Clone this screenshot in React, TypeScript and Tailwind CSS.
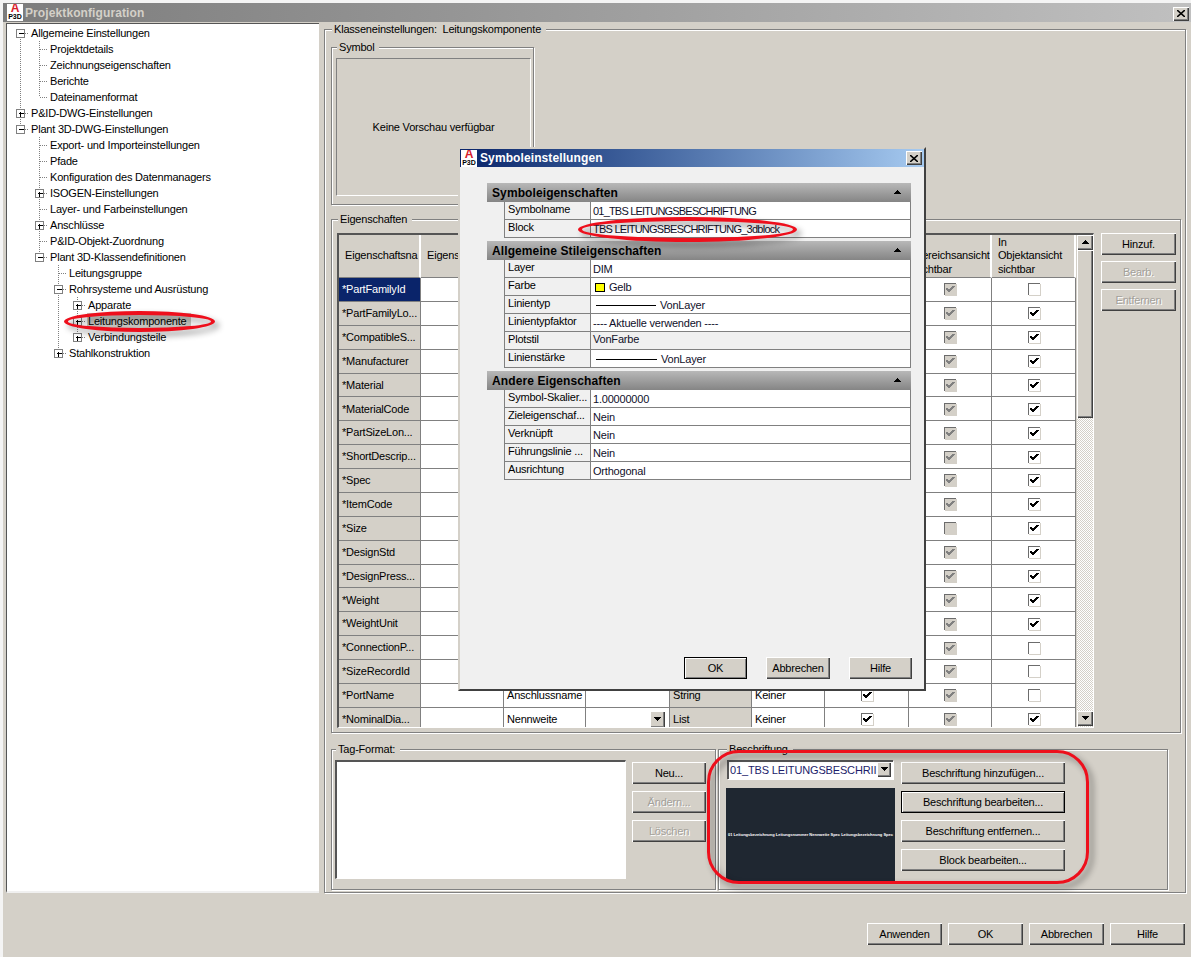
import type { ReactNode } from "react";

const raised =
  "shadow-[inset_1px_1px_0_#fff,inset_-1px_-1px_0_#404040,inset_-2px_-2px_0_#808080]";
const sans = "font-['Liberation_Sans',Arial,sans-serif]";
const heavy = "font-['Liberation_Sans',Arial,sans-serif] font-bold text-[12px] tracking-[0.1px]";

type TreeItem = {
  label: string;
  depth: number;
  exp?: "+" | "-";
  lines?: number[];
  last?: boolean;
  first?: boolean;
  selected?: boolean;
};

const treeItems: TreeItem[] = [
  { label: "Allgemeine Einstellungen", depth: 0, exp: "-", first: true },
  { label: "Projektdetails", depth: 1, lines: [0] },
  { label: "Zeichnungseigenschaften", depth: 1, lines: [0] },
  { label: "Berichte", depth: 1, lines: [0] },
  { label: "Dateinamenformat", depth: 1, lines: [0], last: true },
  { label: "P&ID-DWG-Einstellungen", depth: 0, exp: "+" },
  { label: "Plant 3D-DWG-Einstellungen", depth: 0, exp: "-", last: true },
  { label: "Export- und Importeinstellungen", depth: 1 },
  { label: "Pfade", depth: 1 },
  { label: "Konfiguration des Datenmanagers", depth: 1 },
  { label: "ISOGEN-Einstellungen", depth: 1, exp: "+" },
  { label: "Layer- und Farbeinstellungen", depth: 1 },
  { label: "Anschlüsse", depth: 1, exp: "+" },
  { label: "P&ID-Objekt-Zuordnung", depth: 1 },
  { label: "Plant 3D-Klassendefinitionen", depth: 1, exp: "-", last: true },
  { label: "Leitungsgruppe", depth: 2 },
  { label: "Rohrsysteme und Ausrüstung", depth: 2, exp: "-" },
  { label: "Apparate", depth: 3, exp: "+", lines: [2] },
  { label: "Leitungskomponente", depth: 3, exp: "+", lines: [2], selected: true },
  { label: "Verbindungsteile", depth: 3, exp: "+", lines: [2], last: true },
  { label: "Stahlkonstruktion", depth: 2, exp: "+", last: true },
];

const TreeRow = ({ item }: { item: TreeItem }) => {
  const cx = 13.5 + 19 * item.depth;
  const w = 24 + 19 * item.depth;
  return (
    <div className="flex h-4 items-center">
      <svg width={w} height={16} shapeRendering="crispEdges" className="shrink-0">
        <g stroke="#808080" strokeDasharray="1 1" fill="none">
          {(item.lines || []).map((l) => (
            <path key={l} d={`M${13.5 + 19 * l} 0V16`} />
          ))}
          <path d={`M${cx} ${item.first ? 8 : 0}V${item.last ? 8 : 16}`} />
          <path d={`M${cx} 8.5H${w - 2}`} />
        </g>
        {item.exp && (
          <g>
            <rect x={cx - 4} y={4.5} width={8} height={8} fill="#fff" stroke="#808080" />
            <path d={`M${cx - 2} 8.5H${cx + 3}`} stroke="#000" />
            {item.exp === "+" && <path d={`M${cx} 6.5V11.5`} stroke="#000" />}
          </g>
        )}
      </svg>
      <span
        className={`h-4 leading-4 pr-1 ${item.selected ? "bg-[#c8c8c2] -ml-px pl-px" : ""}`}
      >
        {item.label}
      </span>
    </div>
  );
};

const Btn = ({
  children,
  w,
  disabled,
  isDefault,
}: {
  children: ReactNode;
  w: string;
  disabled?: boolean;
  isDefault?: boolean;
}) => (
  <div
    className={`${w} h-[22px] shrink-0 flex items-center justify-center bg-[#d4d0c8] ${
      isDefault
        ? "border border-black shadow-[inset_1px_1px_0_#fff,inset_-1px_-1px_0_#808080]"
        : raised
    } ${disabled ? "text-[#a3a09a] [text-shadow:1px_1px_0_#fff]" : "text-black"}`}
  >
    {children}
  </div>
);

const Group = ({
  title,
  className,
  children,
}: {
  title: string;
  className: string;
  children: ReactNode;
}) => (
  <fieldset
    className={`border border-[#808080] shadow-[1px_1px_0_#fff,inset_1px_1px_0_#fff] ${className}`}
  >
    <legend className="ml-[1px] bg-[#d4d0c8] px-[2px] pr-[5px] h-[13px] leading-[13px] whitespace-pre">
      {title}
    </legend>
    {children}
  </fieldset>
);

const Check = ({ on, disabled }: { on: boolean; disabled?: boolean }) => (
  <div
    className={`w-[12px] h-[12px] border-t border-l border-[#6c6c6c] shadow-[1px_1px_0_#d4d0c8] ${
      disabled ? "bg-[#d4d0c8]" : "bg-white"
    }`}
  >
    {on && (
      <svg width="11" height="11" viewBox="0 0 11 11" shapeRendering="crispEdges">
        <path
          d="M1.5 4.5L4 7.5L9 2"
          fill="none"
          stroke={disabled ? "#808080" : "#000"}
          strokeWidth="2"
        />
      </svg>
    )}
  </div>
);

const Arrow = ({ dir }: { dir: "up" | "down" }) => (
  <svg width="9" height="5" viewBox="0 0 9 5" shapeRendering="crispEdges">
    <path d={dir === "down" ? "M1 0h7L4.5 4z" : "M4.5 0L8 4H1z"} fill="#000" />
  </svg>
);

type PropRow = {
  name: string;
  areaOff?: boolean;
  objOn: boolean;
  label?: string;
  kind?: string;
  list?: boolean;
  useOn?: boolean;
};

const propRows: PropRow[] = [
  { name: "*PartFamilyId", objOn: false },
  { name: "*PartFamilyLo...", objOn: true },
  { name: "*CompatibleS...", objOn: true },
  { name: "*Manufacturer", objOn: true },
  { name: "*Material", objOn: true },
  { name: "*MaterialCode", objOn: true },
  { name: "*PartSizeLon...", objOn: true },
  { name: "*ShortDescrip...", objOn: true },
  { name: "*Spec", objOn: true },
  { name: "*ItemCode", objOn: true },
  { name: "*Size", objOn: true, areaOff: true },
  { name: "*DesignStd", objOn: true },
  { name: "*DesignPress...", objOn: true },
  { name: "*Weight", objOn: true },
  { name: "*WeightUnit", objOn: true },
  { name: "*ConnectionP...", objOn: false },
  { name: "*SizeRecordId", objOn: false },
  { name: "*PortName", objOn: false, label: "Anschlussname", kind: "String", useOn: true },
  { name: "*NominalDia...", objOn: true, label: "Nennweite", kind: "List", list: true, useOn: true },
];

const cell = "border-r border-b border-[#808080] overflow-hidden whitespace-nowrap flex items-center";

const PropertyTable = () => (
  <div className="w-[757px] h-[495px] shrink-0 flex border-t-2 border-l-2 border-[#555] border-r border-b border-r-white border-b-white overflow-hidden">
    <div className="grid w-[738px] shrink-0 content-start grid-cols-[82px_83px_82px_84px_82px_73px_84px_83px_84px] grid-rows-[43px] auto-rows-[23.88px]">
      {[
        "Eigenschaftsna",
        "Eigenschaft",
        "",
        "",
        "",
        "",
        "",
        "In Bereichsansicht sichtbar",
        "In Objektansicht sichtbar",
      ].map((h, i) => (
        <div
          key={i}
          className={`bg-[#d4d0c8] border-b border-[#808080] border-r-2 border-r-white flex items-center leading-[13.5px] overflow-hidden ${
            i < 2 ? "pl-[6px] whitespace-nowrap" : "pl-[6px] pr-2"
          }`}
        >
          {h}
        </div>
      ))}
      {propRows.map((r, idx) => (
        <div key={r.name} className="contents">
          <div
            className={`${cell} pl-[3px] ${
              idx === 0 ? "bg-[#0a246a] text-white" : "bg-[#d4d0c8]"
            }`}
          >
            {r.name}
          </div>
          <div className={`${cell} bg-white`} />
          <div className={`${cell} bg-white pl-[3px]`}>{r.label}</div>
          <div className={`${cell} bg-white justify-end pr-[4px]`}>
            {r.list && (
              <div className={`w-[15px] h-[17px] bg-[#d4d0c8] flex items-center justify-center ${raised}`}>
                <Arrow dir="down" />
              </div>
            )}
          </div>
          <div className={`${cell} bg-[#d4d0c8] pl-[3px]`}>{r.kind}</div>
          <div className={`${cell} bg-white pl-[3px]`}>{r.kind && "Keiner"}</div>
          <div className={`${cell} bg-white justify-center`}>
            <Check on={!!r.useOn} />
          </div>
          <div className={`${cell} bg-white justify-center`}>
            <Check on={!r.areaOff} disabled />
          </div>
          <div className={`${cell} bg-white justify-center`}>
            <Check on={r.objOn} />
          </div>
        </div>
      ))}
    </div>
    <div className="w-[16px] shrink-0 flex flex-col bg-[length:2px_2px] bg-[image:repeating-conic-gradient(#fff_0_25%,#d4d0c8_0_50%)]">
      <div className={`h-[15px] bg-[#d4d0c8] flex items-center justify-center ${raised}`}>
        <Arrow dir="up" />
      </div>
      <div className={`h-[168px] bg-[#d4d0c8] ${raised}`} />
      <div className={`mt-auto mb-[1px] h-[15px] bg-[#d4d0c8] flex items-center justify-center ${raised}`}>
        <Arrow dir="down" />
      </div>
    </div>
  </div>
);

const AppIcon = () => (
  <div className="w-4 h-[17px] bg-white flex flex-col items-center overflow-hidden shrink-0">
    <span className="font-bold text-[12px] leading-[9px] text-[#d8202c]">A</span>
    <span className="font-bold text-[7px] leading-[8px] tracking-normal text-black">P3D</span>
  </div>
);

const TypeLine = ({ text, w }: { text: string; w: string }) => (
  <div className="flex items-center h-[15px] pl-[3px]">
    <div className={`${w} h-px bg-black mr-1`} />
    <span>{text}</span>
  </div>
);

type DialogRow = { label: string; value: ReactNode; readonly?: boolean };

const sections: { title: string; rows: DialogRow[] }[] = [
  {
    title: "Symboleigenschaften",
    rows: [
      {
        label: "Symbolname",
        value: <span className="tracking-[-0.8px]">01_TBS LEITUNGSBESCHRIFTUNG</span>,
      },
      {
        label: "Block",
        value: <span className="tracking-[-0.75px]">TBS LEITUNGSBESCHRIFTUNG_3dblock</span>,
      },
    ],
  },
  {
    title: "Allgemeine Stileigenschaften",
    rows: [
      { label: "Layer", value: "DIM" },
      {
        label: "Farbe",
        value: (
          <div className="flex items-center h-[15px] pl-[2px]">
            <div className="w-[10px] h-[9px] bg-[#ffff00] border border-black mr-[4px]" />
            <span>Gelb</span>
          </div>
        ),
      },
      { label: "Linientyp", value: <TypeLine text="VonLayer" w="w-[60px]" /> },
      { label: "Linientypfaktor", value: "---- Aktuelle verwenden ----" },
      { label: "Plotstil", value: "VonFarbe", readonly: true },
      { label: "Linienstärke", value: <TypeLine text="VonLayer" w="w-[61px]" /> },
    ],
  },
  {
    title: "Andere Eigenschaften",
    rows: [
      { label: "Symbol-Skalier...", value: "1.00000000" },
      { label: "Zieleigenschaf...", value: "Nein" },
      { label: "Verknüpft", value: "Nein" },
      { label: "Führungslinie ...", value: "Nein" },
      { label: "Ausrichtung", value: "Orthogonal" },
    ],
  },
];

const SymbolDialog = () => (
  <div className="absolute left-[458px] top-[147px] w-[468px] h-[544px] flex flex-col bg-[#f0f0f0] border-2 border-t-[#d4d0c8] border-l-[#d4d0c8] border-r-[#404040] border-b-[#404040]">
    <div className="h-[18px] shrink-0 flex items-center pl-[1px] pr-[2px] bg-gradient-to-r from-[#0a246a] to-[#a6caf0]">
      <AppIcon />
      <span className={`${heavy} ml-[3px] text-white`}>Symboleinstellungen</span>
      <div className={`ml-auto w-4 h-[14px] bg-[#d4d0c8] flex items-center justify-center ${raised}`}>
        <svg width="8" height="7" viewBox="0 0 8 7">
          <path d="M0 0L8 7M8 0L0 7" stroke="#000" strokeWidth="1.6" />
        </svg>
      </div>
    </div>
    <div className="ml-[27px] w-[424px] mt-4 flex flex-col gap-[3px]">
      {sections.map((s) => (
        <div key={s.title}>
          <div className="h-[19px] flex items-center justify-between pl-[5px] pr-[9px] bg-gradient-to-b from-[#b8b8b8] to-[#858585]">
            <span className={`${heavy} text-black`}>{s.title}</span>
            <Arrow dir="up" />
          </div>
          <div className="ml-[17px] border-l border-[#808080]">
            {s.rows.map((row) => (
              <div
                key={row.label}
                className="h-[18px] grid grid-cols-[86px_1fr] border-r border-b border-[#808080]"
              >
                <div className="pl-[3px] border-r border-[#808080] leading-[15px] whitespace-nowrap overflow-hidden">
                  {row.label}
                </div>
                <div
                  className={`h-[17px] overflow-hidden pl-[2px] whitespace-nowrap text-[#10102a] leading-[15px] ${
                    row.readonly ? "bg-[#f0f0f0]" : "bg-white pt-[2px]"
                  }`}
                >
                  {row.value}
                </div>
              </div>
            ))}
          </div>
        </div>
      ))}
    </div>
    <div className="mt-auto mb-[10px] mr-[12px] flex justify-end gap-[19px]">
      <Btn w="w-[63px]" isDefault>
        OK
      </Btn>
      <Btn w="w-[64px]">Abbrechen</Btn>
      <Btn w="w-[63px]">Hilfe</Btn>
    </div>
  </div>
);

const RedMark = ({ className }: { className: string }) => (
  <div
    className={`absolute border-[#ee0f1c] drop-shadow-[4px_4px_3px_rgba(0,0,0,0.45)] ${className}`}
  />
);

export default function App() {
  return (
    <div className={`relative w-[1191px] h-[957px] overflow-hidden bg-[#f4f4f4] pt-[3px] pl-[3px] text-[11px] tracking-[-0.2px] text-black ${sans}`}>
      <div className="h-[954px] bg-[#d4d0c8] flex flex-col">
        <div className="h-[19px] shrink-0 flex items-center pl-[4px] pr-[2px] bg-gradient-to-r from-[#7c7c7c] to-[#c0c0c0]">
          <AppIcon />
          <span className={`${heavy} ml-[2px] pt-[1px] text-[#d4d0c8]`}>Projektkonfiguration</span>
          <div className={`ml-auto mt-[2px] w-4 h-[14px] bg-[#d4d0c8] flex items-center justify-center ${raised}`}>
            <svg width="8" height="7" viewBox="0 0 8 7">
              <path d="M0 0L8 7M8 0L0 7" stroke="#000" strokeWidth="1.6" />
            </svg>
          </div>
        </div>
        <div className="flex h-[870px] mt-px">
          <div className="ml-[3px] w-[313px] h-[870px] pt-[1px] bg-white border-l border-l-[#555] border-t border-t-[#555] border-b-2 border-b-[#f0f0f0]">
            {treeItems.map((item) => (
              <TreeRow key={item.label} item={item} />
            ))}
          </div>
          <Group
            title={"Klasseneinstellungen:  Leitungskomponente"}
            className="ml-[5px] w-[862px] h-[870px] pl-[6px]"
          >
            <Group title="Symbol" className="mt-[5px] w-[203px] h-[164px] pl-[4px]">
              <div className="mt-[4px] w-[195px] h-[138px] border border-[#808080] border-r-white border-b-white flex items-center justify-center">
                Keine Vorschau verfügbar
              </div>
            </Group>
            <Group title="Eigenschaften" className="mt-[8px] w-[850px] h-[520px] pl-[5px]">
              <div className="mt-[7px] flex">
                <PropertyTable />
                <div className="ml-[7px] flex flex-col gap-[6px]">
                  <Btn w="w-[75px]">Hinzuf.</Btn>
                  <Btn w="w-[75px]" disabled>
                    Bearb.
                  </Btn>
                  <Btn w="w-[75px]" disabled>
                    Entfernen
                  </Btn>
                </div>
              </div>
            </Group>
            <div className="mt-[10px] flex gap-[2px]">
              <Group title="Tag-Format:" className="w-[385px] h-[147px] pl-[3px]">
                <div className="mt-[4px] flex">
                  <div className="w-[291px] h-[119px] bg-white border-t-2 border-l-2 border-[#555] border-r border-b border-r-white border-b-white" />
                  <div className="ml-[6px] mt-[2px] flex flex-col gap-[7px]">
                    <Btn w="w-[74px]">Neu...</Btn>
                    <Btn w="w-[74px]" disabled>
                      Ändern...
                    </Btn>
                    <Btn w="w-[74px]" disabled>
                      Löschen
                    </Btn>
                  </div>
                </div>
              </Group>
              <Group title="Beschriftung" className="w-[450px] h-[147px] pl-[7px]">
                <div className="mt-[4px] flex">
                  <div className="w-[169px] flex flex-col">
                    <div className="ml-[1px] w-[166px] h-[19px] flex bg-white border-t-2 border-l-2 border-[#555] shadow-[1px_1px_0_#fff]">
                      <span className="pl-px w-[148px] overflow-hidden whitespace-nowrap tracking-[-0.15px] text-[#1c1c6a] leading-[17px]">
                        01_TBS LEITUNGSBESCHRII
                      </span>
                      <div className={`w-[14px] h-[15px] bg-[#d4d0c8] flex items-center justify-center ${raised}`}>
                        <Arrow dir="down" />
                      </div>
                    </div>
                    <div className="mt-[9px] h-[93px] bg-[#1f2731] flex items-center justify-center overflow-hidden">
                      <span className="text-[4px] leading-[4px] font-bold tracking-normal text-white whitespace-nowrap">
                        01 Leitungsbezeichnung Leitungsnummer Nennweite Spec Leitungsbezeichnung Spec
                      </span>
                    </div>
                  </div>
                  <div className="ml-[6px] mt-[2px] flex flex-col gap-[7px]">
                    <Btn w="w-[164px]">Beschriftung hinzufügen...</Btn>
                    <Btn w="w-[164px]" isDefault>
                      Beschriftung bearbeiten...
                    </Btn>
                    <Btn w="w-[164px]">Beschriftung entfernen...</Btn>
                    <Btn w="w-[164px]">Block bearbeiten...</Btn>
                  </div>
                </div>
              </Group>
            </div>
          </Group>
        </div>
        <div className="mt-[30px] pr-[6px] flex justify-end gap-[6px]">
          <Btn w="w-[75px]">Anwenden</Btn>
          <Btn w="w-[75px]">OK</Btn>
          <Btn w="w-[75px]">Abbrechen</Btn>
          <Btn w="w-[75px]">Hilfe</Btn>
        </div>
      </div>
      <SymbolDialog />
      <RedMark className="left-[64px] top-[311px] w-[151px] h-[21px] border-4 rounded-[50%]" />
      <RedMark className="left-[578px] top-[217px] w-[219px] h-[25px] border-4 rounded-[50%]" />
      <RedMark className="left-[707px] top-[750px] w-[382px] h-[134px] border-[3px] rounded-[32px]" />
    </div>
  );
}
